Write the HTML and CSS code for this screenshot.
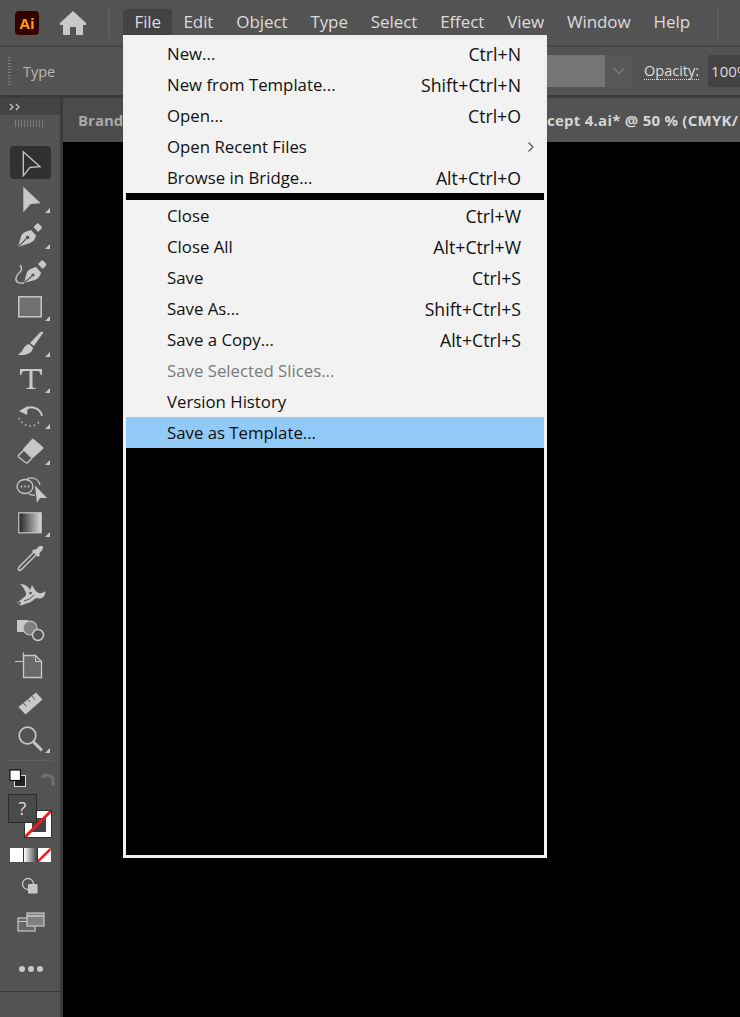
FILE: index.html
```html
<!DOCTYPE html>
<html lang="en">
<head>
<meta charset="utf-8">
<title>Illustrator File menu</title>
<link rel="stylesheet" href="styles.css">
</head>
<body>
<div class="app">
  <header class="menubar">
    <div class="ai-logo">Ai</div>
    <svg class="home" width="28" height="26" viewBox="0 0 28 26"><path d="M14 1 L27 13 Q28 15 26 15 L24 15 L24 25 L17 25 L17 17 L11 17 L11 25 L4 25 L4 15 L2 15 Q0 15 1 13 Z" fill="#c9c9c9"/></svg>
    <span class="vsep"></span>
    <nav class="menus">
      <span class="menu-item active">File</span>
      <span class="menu-item">Edit</span>
      <span class="menu-item">Object</span>
      <span class="menu-item">Type</span>
      <span class="menu-item">Select</span>
      <span class="menu-item">Effect</span>
      <span class="menu-item">View</span>
      <span class="menu-item">Window</span>
      <span class="menu-item">Help</span>
    </nav>
    <span class="vsep end"></span>
  </header>

  <section class="controlbar">
    <span class="grip-v"></span>
    <span class="ctl-type">Type</span>
    <span class="ctl-swatch"></span>
    <span class="ctl-chevron"><svg width="14" height="8" viewBox="0 0 14 8"><path d="M1.500 1 L7 6.500 L12.500 1" fill="none" stroke="#777" stroke-width="1.600"/></svg></span>
    <span class="ctl-label">Opacity:</span>
    <span class="ctl-input">100%</span>
  </section>

  <div class="workspace">
    <aside class="toolbar">
      <div class="tb-head"><svg width="12" height="8" viewBox="0 0 12 8"><path d="M1 1 L4 4 L1 7 M7 1 L10 4 L7 7" fill="none" stroke="#c8c8c8" stroke-width="1.200"/></svg></div>
      <div class="tb-grip"></div>
      <div class="tools">
        <div class="tool selected"><svg viewBox="0 0 44 36"><path d="M14.300 6.700 L31 21.700 L21 22.300 L14.300 30.700 Z" fill="none" stroke="#c8c8c8" stroke-width="1.300"/></svg></div>
        <div class="tool"><svg viewBox="0 0 44 36"><path d="M14.300 5.700 L31.700 22.300 L21.700 23 L14.300 31.300 Z" fill="#c8c8c8"/><path class="tri" d="M41 27 V32 H36 Z"/></svg></div>
        <div class="tool"><svg viewBox="0 0 44 36"><path d="M9 30 L12.500 18 Q14.500 15 22 13 L27 18.500 Q26 24 21 26 Z" fill="#c8c8c8"/><path d="M24.500 10 L28 6.500 Q29 6 30 7 L32.500 9.500 Q33 10.500 32.500 11.500 L29 15 Z" fill="#c8c8c8"/><path d="M9.500 29.500 L17 22" stroke="#535353" stroke-width="1.100"/><circle cx="18.500" cy="20.500" r="1.800" fill="#535353"/><path class="tri" d="M41 27 V32 H36 Z"/></svg></div>
        <div class="tool"><svg viewBox="0 0 44 36"><path d="M15 30 L18 19 Q20 16 27 14 L32 19.500 Q31 25 26 27 Z" fill="#c8c8c8"/><path d="M29 11 L32.500 7.500 Q33.500 7 34.500 8 L37 10.500 Q37.500 11.500 37 12.500 L33.500 16 Z" fill="#c8c8c8"/><path d="M15.500 29.500 L23 23" stroke="#535353" stroke-width="1.100"/><circle cx="24" cy="22" r="1.600" fill="#535353"/><path d="M15 30 Q6 31 7 25 Q8 21 11 19 Q14 16 11 12" fill="none" stroke="#c8c8c8" stroke-width="1.400"/></svg></div>
        <div class="tool"><svg viewBox="0 0 44 36"><rect x="9.800" y="7.800" width="22.400" height="20" fill="#707070" stroke="#c8c8c8" stroke-width="1.500"/><path class="tri" d="M41 27 V32 H36 Z"/></svg></div>
        <div class="tool"><svg viewBox="0 0 44 36"><path d="M33 6.500 Q34.500 6.500 34 8 L25 21 L21 18 L31 7.500 Z" fill="#c8c8c8"/><path d="M20 19 L24 22.500 Q23.500 28 17 29.500 Q13 30.500 9 29.500 Q13 27 14.500 23.500 Q16 20 20 19 Z" fill="#c8c8c8"/><path class="tri" d="M41 27 V32 H36 Z"/></svg></div>
        <div class="tool"><svg viewBox="0 0 44 36"><path d="M11 8 H33 V14 H31.500 Q31.500 10 28 10 H23.500 V26 Q23.500 27 26.500 27 V28 H17.500 V27 Q20.500 27 20.500 26 V10 H16 Q12.500 10 12.500 14 H11 Z" fill="#c8c8c8"/><path class="tri" d="M41 27 V32 H36 Z"/></svg></div>
        <div class="tool"><svg viewBox="0 0 44 36"><path d="M15 13 A11 11 0 0 1 33 19" fill="none" stroke="#c8c8c8" stroke-width="2"/><path d="M10 14 L19 9 L18 18 Z" fill="#c8c8c8"/><path d="M10 21 A12 12 0 0 0 31 24" fill="none" stroke="#c8c8c8" stroke-width="1.500" stroke-dasharray="1.500 3"/><path class="tri" d="M41 27 V32 H36 Z"/></svg></div>
        <div class="tool"><svg viewBox="0 0 44 36"><path d="M24 5.500 L34 14 Q35 15 34 16 L24 25 L14 16 L23 6 Q23.500 5.500 24 5.500 Z" fill="#c8c8c8"/><path d="M15 17 L23 25 L19 29.500 Q18 30.500 16.500 29.500 L9.500 24 Q9 23 9.800 22 Z" fill="#535353" stroke="#c8c8c8" stroke-width="1.300"/><path class="tri" d="M41 27 V32 H36 Z"/></svg></div>
        <div class="tool"><svg viewBox="0 0 44 36"><ellipse cx="16" cy="17.500" rx="8" ry="7" fill="none" stroke="#c8c8c8" stroke-width="1.300"/><path d="M18 10 A9 9 0 0 1 31 16" fill="none" stroke="#c8c8c8" stroke-width="1.300"/><path d="M20 25 A9 9 0 0 0 26 26" fill="none" stroke="#c8c8c8" stroke-width="1.300"/><path d="M26 16.500 L38 29 L31 29 L28 34 Z" fill="#c8c8c8"/><circle cx="12.500" cy="17.500" r=".9" fill="#c8c8c8"/><circle cx="16" cy="17.500" r=".9" fill="#c8c8c8"/><circle cx="19.500" cy="17.500" r=".9" fill="#c8c8c8"/></svg></div>
        <div class="tool"><svg viewBox="0 0 44 36"><defs><linearGradient id="grad"><stop offset="0" stop-color="#222"/><stop offset="1" stop-color="#d8d8d8"/></linearGradient></defs><rect x="9.800" y="7.800" width="22.400" height="20" fill="url(#grad)" stroke="#c8c8c8" stroke-width="1.200"/><path class="tri" d="M41 27 V32 H36 Z"/></svg></div>
        <div class="tool"><svg viewBox="0 0 44 36"><path d="M28 13 L13.500 27.500 Q11.500 30 10 29.500 Q8.500 28 10.500 25.500 L25 11" fill="none" stroke="#c8c8c8" stroke-width="1.400"/><path d="M23 10 L25 8 L26 9 L30 5.500 Q32 4 33.500 5.500 Q35 7 33 9 L30 13 L31 14 L29 16 Z" fill="#c8c8c8"/></svg></div>
        <div class="tool"><svg viewBox="0 0 44 36"><path d="M11 7 C16 7 20 10 21 13 L23 8 L26 13 C29 17 33 17 36.500 14 C36.500 20 32 23 28 21 C25 21 24 25 19 26 L12 28.500 L8 26 L14 21 C17 19 18 17 16 14 C15 11 13 9 11 7 Z" fill="#c8c8c8"/><circle cx="10.500" cy="26" r="1.300" fill="#535353"/><circle cx="21.500" cy="16" r="1.300" fill="#535353"/><path d="M15 24 Q21 23 25 18" fill="none" stroke="#535353" stroke-width="1"/></svg></div>
        <div class="tool"><svg viewBox="0 0 44 36"><rect x="8" y="7" width="11" height="12" fill="#c8c8c8"/><circle cx="21" cy="15" r="7" fill="#808080" stroke="#c8c8c8" stroke-width="1.200"/><circle cx="29" cy="22" r="5.500" fill="#535353" stroke="#c8c8c8" stroke-width="1.500"/></svg></div>
        <div class="tool"><svg viewBox="0 0 44 36"><path d="M14.500 6.500 V28.500 H32.500 V12.500 L26.500 6.500 Z" fill="#6a6a6a" stroke="#c8c8c8" stroke-width="1.300"/><path d="M26.500 6.500 V12.500 H32.500" fill="none" stroke="#c8c8c8" stroke-width="1"/><path d="M6 12.500 H14.500 M14.500 3.500 V12.500" stroke="#c8c8c8" stroke-width="1.200"/></svg></div>
        <div class="tool"><svg viewBox="0 0 44 36"><path d="M9.500 22 L27 7.500 L33.500 14.500 L16.500 29.500 Z" fill="#c8c8c8"/><path d="M14.500 18 L17.500 21.500 M19 14.500 L21 17 M23 11 L26 14.500" stroke="#535353" stroke-width="1"/></svg></div>
        <div class="tool"><svg viewBox="0 0 44 36"><circle cx="18.500" cy="14.500" r="8.300" fill="none" stroke="#c8c8c8" stroke-width="1.700"/><path d="M24.500 21 L33 29.500" stroke="#c8c8c8" stroke-width="3"/><path class="tri" d="M41 27 V32 H36 Z"/></svg></div>
      </div>
      <div class="tb-rule"></div>
      <div class="swap-row">
        <svg width="18" height="19" viewBox="0 0 18 19"><rect x="5.500" y="6.500" width="11" height="11" fill="#222" stroke="#ddd"/><rect x="1" y="1" width="10.500" height="10.500" fill="#fff" stroke="#111" stroke-width="1.200"/></svg>
        <svg width="17" height="17" viewBox="0 0 17 17"><path d="M7 2 L1.500 6.500 L7 9 V6.800 Q12.500 6 12.500 10.500 V15.500 H15.500 V9.500 Q15.500 4 7 4 Z" fill="#6f6f6f"/></svg>
      </div>
      <div class="fill-stroke">
        <div class="stroke-box"><span class="stroke-hole"></span><svg class="slash" viewBox="0 0 28 28"><path d="M0 28 L28 0" stroke="#ed1c24" stroke-width="3"/></svg></div>
        <div class="fill-box">?</div>
      </div>
      <div class="modes">
        <span class="mode white"></span>
        <span class="mode gradient"></span>
        <span class="mode none"><svg viewBox="0 0 13 13"><path d="M0 13 L13 0" stroke="#ed1c24" stroke-width="2.400"/></svg></span>
      </div>
      <div class="tb-icon draw-mode"><svg width="18" height="18" viewBox="0 0 18 18"><circle cx="7" cy="7" r="5.500" fill="none" stroke="#c8c8c8" stroke-width="1.300"/><rect x="7" y="7" width="9.500" height="9.500" rx="1" fill="#c8c8c8"/></svg></div>
      <div class="tb-icon screen-mode"><svg width="28" height="20" viewBox="0 0 28 20"><rect x="1" y="6" width="17" height="13" fill="#666" stroke="#c8c8c8" stroke-width="1.200"/><path d="M1 9.500 H18" stroke="#c8c8c8"/><rect x="10" y="1" width="17" height="13" fill="#808080" stroke="#c8c8c8" stroke-width="1.200"/><path d="M10 4 H27" stroke="#c8c8c8" stroke-width="1.500"/></svg></div>
      <div class="tb-dots"><i></i><i></i><i></i></div>
      <div class="tb-foot"></div>
    </aside>
    <main class="doc">
      <div class="tabs">
        <span class="tab-off">Brand</span>
        <span class="tab-on">cept 4.ai* @ 50 % (CMYK/</span>
      </div>
      <div class="canvas"></div>
    </main>
  </div>

  <div class="dropdown">
    <ul class="group">
      <li class="row"><span>New...</span><span class="key">Ctrl+N</span></li>
      <li class="row"><span>New from Template...</span><span class="key">Shift+Ctrl+N</span></li>
      <li class="row"><span>Open...</span><span class="key">Ctrl+O</span></li>
      <li class="row"><span>Open Recent Files</span><svg class="sub" width="8" height="12" viewBox="0 0 8 12"><path d="M1.500 1.500 L6 6 L1.500 10.500" fill="none" stroke="#555" stroke-width="1.200"/></svg></li>
      <li class="row"><span>Browse in Bridge...</span><span class="key">Alt+Ctrl+O</span></li>
    </ul>
    <div class="divider"></div>
    <ul class="group">
      <li class="row"><span>Close</span><span class="key">Ctrl+W</span></li>
      <li class="row"><span>Close All</span><span class="key">Alt+Ctrl+W</span></li>
      <li class="row"><span>Save</span><span class="key">Ctrl+S</span></li>
      <li class="row"><span>Save As...</span><span class="key">Shift+Ctrl+S</span></li>
      <li class="row"><span>Save a Copy...</span><span class="key">Alt+Ctrl+S</span></li>
      <li class="row disabled"><span>Save Selected Slices...</span></li>
      <li class="row"><span>Version History</span></li>
      <li class="row hover"><span>Save as Template...</span></li>
    </ul>
  </div>
</div>
</body>
</html>
```

FILE: styles.css
```css
* { box-sizing: border-box; }
html, body { margin: 0; padding: 0; height: 100%; background: #000; }
body { font-family: "Open Sans", "Noto Sans", sans-serif; overflow: hidden; }

.app { position: relative; width: 740px; height: 1017px; display: flex; flex-direction: column; background: #000; overflow: hidden; }

/* menu bar */
.menubar { height: 45px; flex: none; background: #535353; display: flex; align-items: center; padding-left: 15px; position: relative; }
.ai-logo { width: 24px; height: 24px; border-radius: 4px; background: #330000; color: #ff9a00; font: 700 15px/24px "Open Sans", sans-serif; text-align: center; }
.home { margin-left: 20px; }
.vsep { width: 2px; height: 30px; background: #5e5e5e; margin-left: 21px; flex: none; }
.vsep.end { margin-left: 16px; }
.menus { display: flex; margin-left: 13px; height: 100%; align-items: flex-start; }
.menu-item { color: #dcdcdc; font-size: 17px; line-height: 25px; padding: 9px 11.500px 0; letter-spacing: -.1px; }
.menu-item.active { background: #434343; border-radius: 4px 4px 0 0; height: 26px; margin-top: 9px; padding: 0 11px 0 11.500px; }

/* control bar */
.controlbar { height: 53px; flex: none; background: #535353; border-top: 2px solid #454545; border-bottom: 3px solid #3c3c3c; display: flex; align-items: center; padding-left: 8px; }
.grip-v { width: 3px; height: 28px; flex: none; background: repeating-linear-gradient(#7a7a7a 0 1px, transparent 1px 3px); }
.ctl-type { color: #b9b9b9; font-size: 14.500px; margin-left: 12px; width: 525px; flex: none; padding-top: 1px; }
.ctl-swatch { width: 58px; height: 32px; background: #757575; flex: none; margin-left: -1px; }
.ctl-chevron { width: 28px; height: 32px; background: #575757; display: flex; align-items: center; justify-content: center; flex: none; }
.ctl-label { color: #dcdcdc; font-size: 14.500px; margin-left: 11px; border-bottom: 1px dotted #dcdcdc; line-height: 17px; flex: none; }
.ctl-input { margin-left: 9px; background: #434343; color: #dcdcdc; font-size: 15px; height: 32px; line-height: 32px; padding-left: 3px; width: 60px; border-radius: 3px; flex: none; white-space: nowrap; }

/* workspace */
.workspace { flex: 1; display: flex; min-height: 0; }
.toolbar { width: 63px; flex: none; background: #535353; border-right: 3px solid #3a3a3a; display: flex; flex-direction: column; }
.tb-head { height: 17px; background: #444; padding-left: 9px; display: flex; align-items: center; }
.tb-grip { height: 30px; padding-top: 5px; }
.tb-grip::before { content: ""; display: block; width: 29px; height: 7px; margin-left: 15px; background: repeating-linear-gradient(90deg, #7d7d7d 0 1px, transparent 1px 3px); }
.tools { display: flex; flex-direction: column; }
.tool { height: 36px; width: 44px; margin-left: 9px; position: relative; }
.tool svg { display: block; width: 44px; height: 36px; overflow: visible; }
.tool.selected::before { content: ""; position: absolute; left: 1px; top: 1px; width: 41px; height: 33px; background: #303030; border-radius: 4px; }
.tool.selected svg { position: relative; }
.tri { fill: #c8c8c8; }
.tb-rule { height: 1px; margin: 3px 7px 0; background: #5f5f5f; }
.swap-row { display: flex; justify-content: space-between; align-items: center; margin: 7px 4px 0 9px; height: 20px; }
.fill-stroke { position: relative; margin: 6px 0 0 8px; width: 44px; height: 44px; }
.stroke-box { position: absolute; left: 16px; top: 16px; width: 28px; height: 28px; background: #fff; border: 1px solid #333; overflow: hidden; }
.stroke-hole { position: absolute; left: 7px; top: 7px; width: 14px; height: 14px; background: #444; }
.slash { position: absolute; inset: 0; width: 100%; height: 100%; }
.fill-box { position: absolute; left: 0; top: 0; width: 29px; height: 29px; background: #4a4a4a; border: 1px solid #2c2c2c; color: #dcdcdc; font-size: 18px; line-height: 26px; text-align: center; }
.modes { display: flex; gap: 1px; margin: 10px 0 0 10px; width: 41px; height: 14px; background: #333; padding: 0; }
.mode { flex: 1; height: 14px; display: block; overflow: hidden; }
.mode.white { background: #fff; }
.mode.gradient { background: linear-gradient(90deg, #fff, #444); }
.mode.none { background: #fff; }
.mode.none svg { display: block; width: 100%; height: 100%; }
.tb-icon { display: flex; justify-content: center; }
.tb-icon svg { display: block; }
.draw-mode { margin-top: 15px; }
.screen-mode { margin-top: 17px; padding-left: 1px; }
.tb-dots { display: flex; gap: 3px; justify-content: center; margin-top: 34px; padding-left: 2px; }
.tb-dots i { width: 6px; height: 6px; border-radius: 50%; background: #c8c8c8; display: block; }
.tb-foot { margin-top: 19px; border-top: 1px solid #3a3a3a; flex: 1; }

/* document */
.doc { flex: 1; display: flex; flex-direction: column; min-width: 0; }
.tabs { height: 44px; flex: none; background: #4b4b4b; display: flex; align-items: center; font-weight: 700; font-size: 15px; white-space: nowrap; overflow: hidden; }
.tab-off { color: #a8a8a8; width: 484px; padding-left: 15px; flex: none; }
.tab-on { background: #535353; color: #d6d6d6; flex: 1; align-self: stretch; line-height: 44px; letter-spacing: .25px; }
.canvas { flex: 1; background: #000; }

/* dropdown */
.dropdown { position: absolute; left: 123px; top: 35px; width: 424px; height: 823px; border: 3px solid #f0f0f0; background: #000; }
.group { list-style: none; margin: 0; padding: 0; background: #f2f2f2; }
.divider { height: 7px; background: #000; }
.row { height: 31px; display: flex; justify-content: space-between; align-items: center; padding: 0 23px 0 41px; color: #111; font-size: 16.800px; white-space: nowrap; position: relative; }
.key { font-size: 17.700px; }
.row.disabled { color: #7a7a7a; }
.row.hover { background: #91c9f7; }
.sub { position: absolute; right: 9px; top: 10px; }
```
